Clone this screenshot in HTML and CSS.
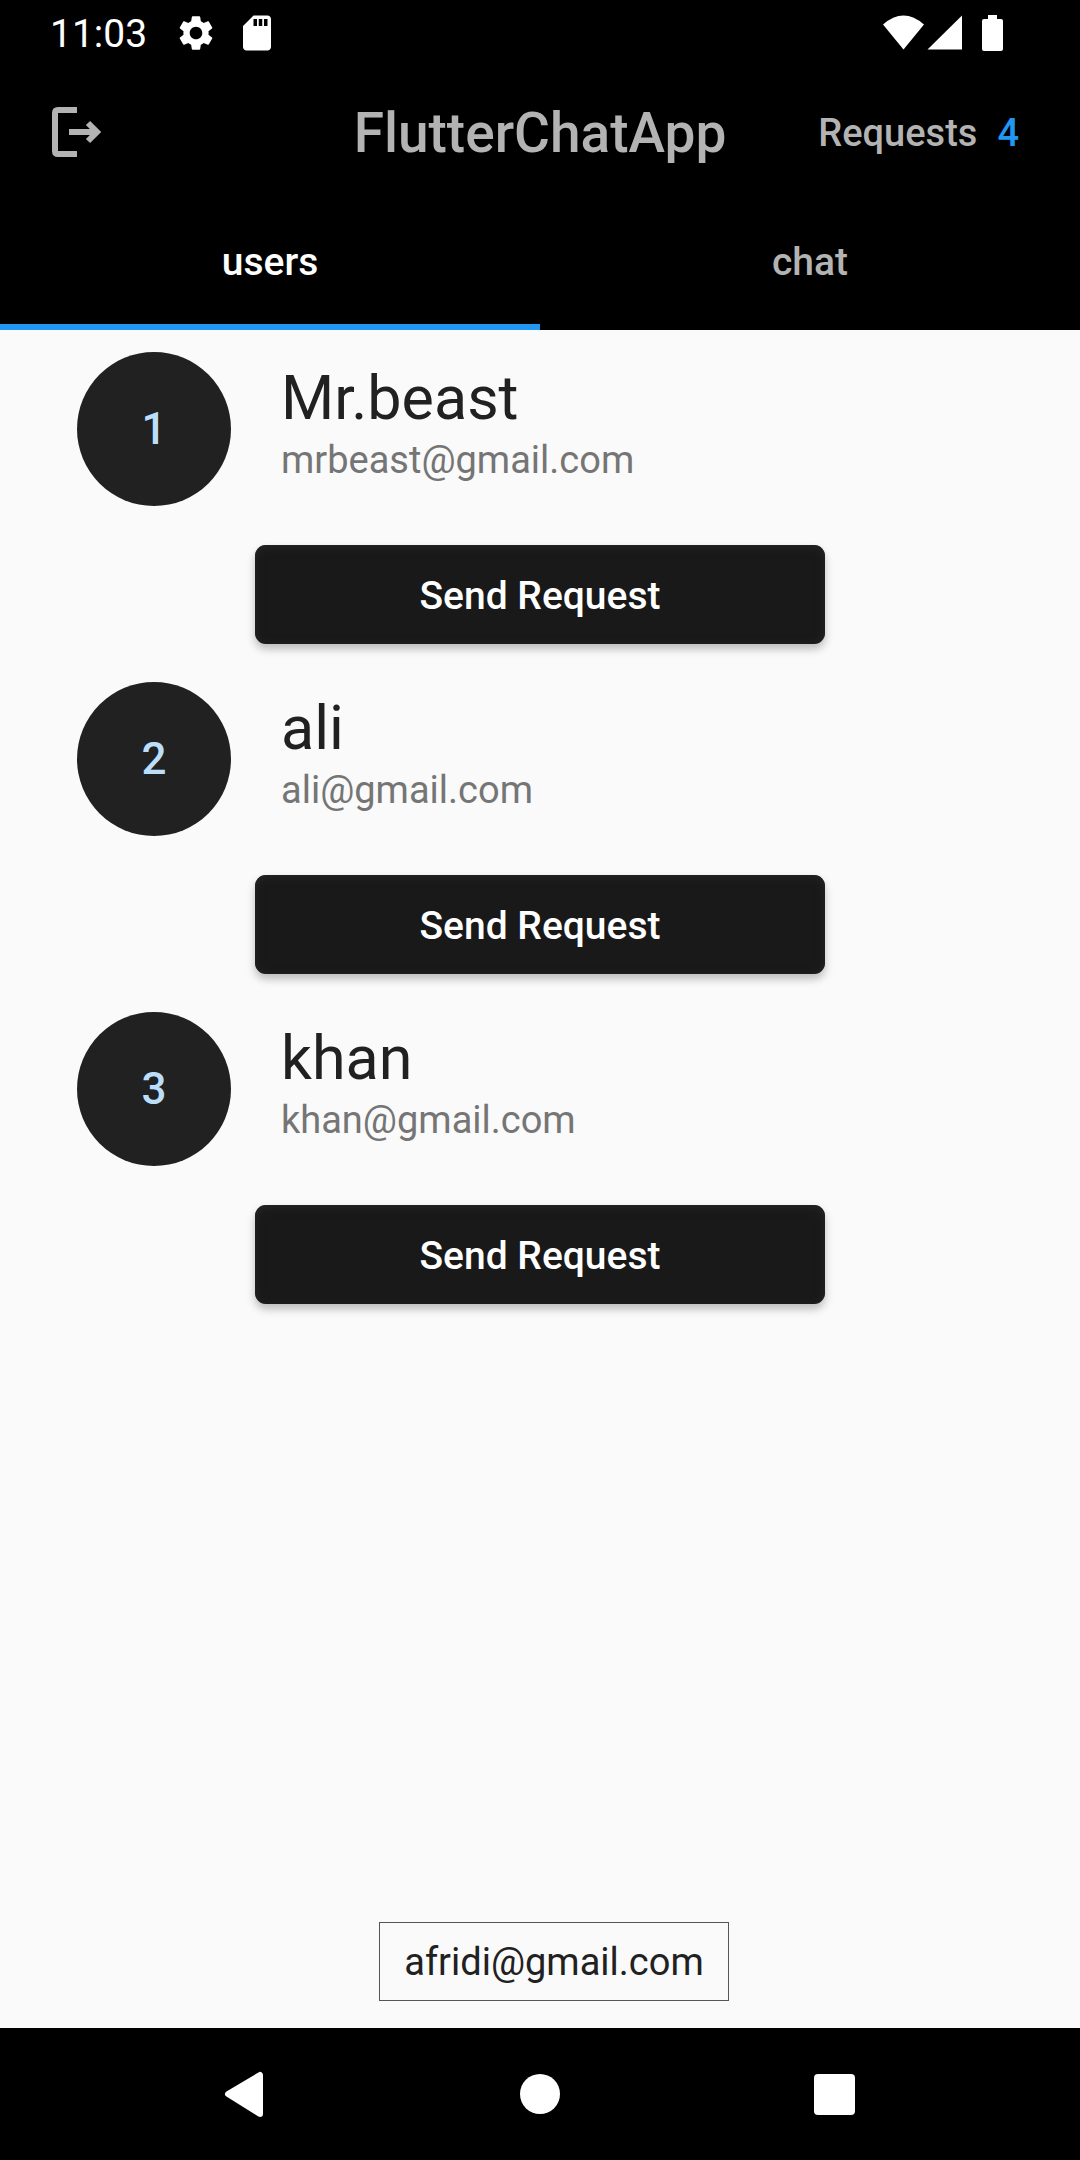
FILE: index.html
```html
<!DOCTYPE html>
<html lang="en">
<head>
<meta charset="utf-8">
<meta name="viewport" content="width=device-width, initial-scale=1">
<title>FlutterChatApp</title>
<link rel="stylesheet" href="styles.css">
</head>
<body>
<div class="status-bar">
  <div class="status-left">
    <span class="clock">11:03</span>
    <svg class="status-icon" viewBox="0 0 24 24" aria-hidden="true"><path d="M19.14 12.94c.04-.3.06-.61.06-.94 0-.32-.02-.64-.07-.94l2.03-1.58c.18-.14.23-.41.12-.61l-1.92-3.32c-.12-.22-.37-.29-.59-.22l-2.39.96c-.5-.38-1.03-.7-1.62-.94l-.36-2.54c-.04-.24-.24-.41-.48-.41h-3.84c-.24 0-.43.17-.47.41l-.36 2.54c-.59.24-1.13.57-1.62.94l-2.39-.96c-.22-.08-.47 0-.59.22L2.74 8.87c-.12.21-.08.47.12.61l2.03 1.58c-.05.3-.09.63-.09.94s.02.64.07.94l-2.03 1.58c-.18.14-.23.41-.12.61l1.92 3.32c.12.22.37.29.59.22l2.39-.96c.5.38 1.03.7 1.62.94l.36 2.54c.05.24.24.41.48.41h3.84c.24 0 .44-.17.47-.41l.36-2.54c.59-.24 1.13-.56 1.62-.94l2.39.96c.22.08.47 0 .59-.22l1.92-3.32c.12-.22.07-.47-.12-.61l-2.01-1.58zM12 15.6c-1.98 0-3.6-1.62-3.6-3.6s1.62-3.6 3.6-3.6 3.6 1.62 3.6 3.6-1.62 3.6-3.6 3.6z"/></svg>
    <svg class="status-icon" viewBox="0 0 24 24" aria-hidden="true"><path d="M18 2h-8L4 8v12c0 1.100.900 2 2 2h12c1.100 0 2-.9 2-2V4c0-1.100-.9-2-2-2zm-6 6h-2V4h2v4zm3 0h-2V4h2v4zm3 0h-2V4h2v4z"/></svg>
  </div>
  <svg class="signal-icons" viewBox="0 0 120 36" aria-hidden="true">
    <path d="M0 9.500Q20.500-8.500 41 9.500L20.500 34.500z"/>
    <path d="M44.500 34.500L79 .5v34z"/>
    <path d="M105 0h9v4h4q2 0 2 2v28q0 2-2 2h-17q-2 0-2-2V6q0-2 2-2h4z"/>
  </svg>
</div>
<header class="app-header">
  <div class="app-bar">
    <button class="logout" type="button" aria-label="Log out">
      <svg viewBox="0 0 50 50" aria-hidden="true"><path d="M25 3H6Q3 3 3 6v38q0 3 3 3h19M17 25h28M36 16l9 9-9 9"/></svg>
    </button>
    <h1 class="title">FlutterChatApp</h1>
    <a class="requests" href="#requests">Requests <span class="count">4</span></a>
  </div>
  <nav class="tabs">
    <a class="tab active" href="#users" aria-current="page">users</a>
    <a class="tab" href="#chat">chat</a>
  </nav>
</header>
<main class="content">
  <ul class="users" id="users">
    <li class="user">
      <div class="profile">
        <span class="avatar">1</span>
        <div class="details"><h2 class="name">Mr.beast</h2><p class="email">mrbeast@gmail.com</p></div>
      </div>
      <button class="send" type="button">Send Request</button>
    </li>
    <li class="user">
      <div class="profile">
        <span class="avatar">2</span>
        <div class="details"><h2 class="name">ali</h2><p class="email">ali@gmail.com</p></div>
      </div>
      <button class="send" type="button">Send Request</button>
    </li>
    <li class="user">
      <div class="profile">
        <span class="avatar">3</span>
        <div class="details"><h2 class="name">khan</h2><p class="email">khan@gmail.com</p></div>
      </div>
      <button class="send" type="button">Send Request</button>
    </li>
  </ul>
  <footer class="account"><span class="account-email">afridi@gmail.com</span></footer>
</main>
<div class="system-nav">
  <button type="button" aria-label="Back"><svg viewBox="0 0 60 60" aria-hidden="true"><path class="rounded" d="M13 30L45 11v39z"/></svg></button>
  <button type="button" aria-label="Home"><svg viewBox="0 0 60 60" aria-hidden="true"><circle cx="30" cy="30" r="20"/></svg></button>
  <button type="button" aria-label="Recent apps"><svg viewBox="0 0 60 60" aria-hidden="true"><rect x="9" y="10" width="41" height="41" rx="4"/></svg></button>
</div>
</body>
</html>
```
FILE: styles.css
```css
* {
  box-sizing: border-box;
}

body {
  margin: 0;
  min-height: 100vh;
  display: flex;
  flex-direction: column;
  background: #fafafa;
  color: #212121;
  font-family: Roboto, sans-serif;
  font-size: 39px;
  line-height: 46px;
}

h1,
h2,
p,
ul {
  margin: 0;
  padding: 0;
}

button {
  padding: 0;
  border: 0;
  background: none;
  font: inherit;
}

a {
  color: inherit;
  text-decoration: none;
}

svg {
  display: block;
  fill: currentColor;
}

.status-bar {
  display: flex;
  justify-content: space-between;
  align-items: center;
  height: 66px;
  padding: 0 77px 0 50px;
  background: #000;
  color: #fff;
}

.status-left {
  display: flex;
  align-items: center;
  gap: 19px;
}

.clock {
  margin-right: 9px;
  padding-top: 2px;
}

.status-icon {
  width: 42px;
  height: 42px;
}

.signal-icons {
  width: 120px;
  height: 36px;
}

.app-header {
  background: #000;
  color: #b3b3b3;
  font-weight: 500;
}

.app-bar {
  display: grid;
  grid-template-columns: 1fr auto 1fr;
  align-items: center;
  height: 132px;
  padding: 0 52px;
}

.logout {
  width: 50px;
  color: inherit;
}

.logout path {
  fill: none;
  stroke: currentColor;
  stroke-width: 6;
}

.title {
  padding-top: 2px;
  font-size: 55px;
  line-height: 66px;
  font-weight: 500;
}

.requests {
  display: flex;
  justify-content: flex-end;
  gap: 20px;
  padding: 2px 9px 0 0;
  font-size: 38px;
}

.count {
  color: #2196f3;
}

.tabs {
  display: flex;
}

.tab {
  flex: 1;
  height: 132px;
  padding: 41px 0 39px;
  border-bottom: 6px solid transparent;
  text-align: center;
}

.tab.active {
  border-color: #2196f3;
  color: #fff;
}

.content {
  flex: 1;
  display: flex;
  flex-direction: column;
  justify-content: space-between;
}

.users {
  display: flex;
  flex-direction: column;
  gap: 38px;
  padding-top: 22px;
  list-style: none;
}

.user {
  display: flex;
  flex-direction: column;
  align-items: center;
  gap: 39px;
}

.profile {
  display: flex;
  align-items: center;
  gap: 50px;
  width: 100%;
  padding: 0 77px;
}

.avatar {
  width: 154px;
  height: 154px;
  border-radius: 50%;
  background: #212121;
  color: #bbdefb;
  font-size: 44px;
  font-weight: 500;
  line-height: 154px;
  text-align: center;
}

.details {
  display: flex;
  flex-direction: column;
  gap: 4px;
  padding-bottom: 12px;
}

.name {
  font-size: 61px;
  line-height: 70px;
  font-weight: 400;
}

.email {
  color: #757575;
  font-size: 38px;
}

.send {
  width: 570px;
  max-width: 90%;
  height: 99px;
  padding-top: 2px;
  border-radius: 11px;
  background: #191919;
  box-shadow: 0 5px 8px rgba(0, 0, 0, 0.25), inset 0 2px 10px #242624;
  color: #fff;
  font-weight: 500;
}

.account {
  display: flex;
  justify-content: center;
  padding: 22px 0 27px 28px;
}

.account-email {
  padding: 16px 24px 15px;
  border: 1px solid #555;
  font-size: 38px;
}

.system-nav {
  display: flex;
  justify-content: center;
  gap: 195px;
  padding: 16px 0;
  background: #000;
  color: #fff;
}

.system-nav button {
  width: 100px;
  height: 100px;
  color: inherit;
}

.system-nav svg {
  width: 60px;
  height: 60px;
  margin: 0 auto;
}

.rounded {
  stroke: currentColor;
  stroke-width: 6;
  stroke-linejoin: round;
}
```
